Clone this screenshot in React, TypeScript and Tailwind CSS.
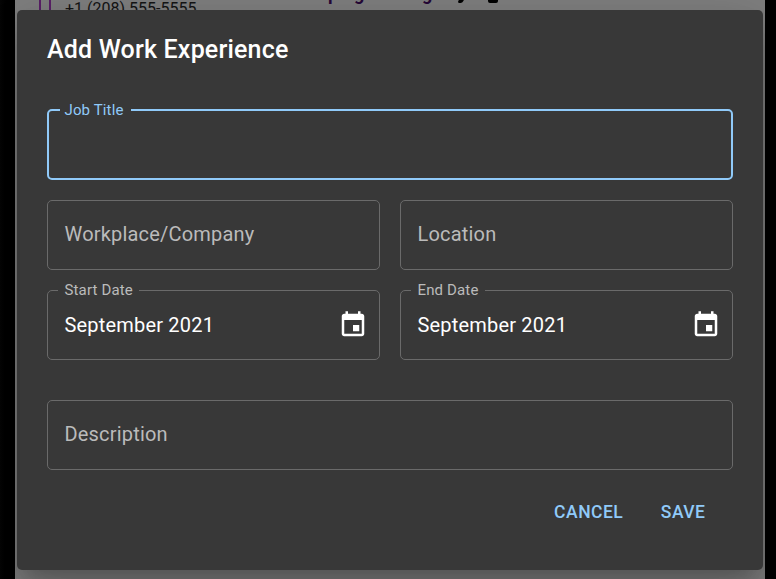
import type { ReactNode } from "react";

function CalendarIcon() {
  return (
    <svg viewBox="0 0 24 24" className="h-[30px] w-[30px] shrink-0 fill-white" aria-hidden="true">
      <path d="M17 12h-5v5h5v-5zM16 1v2H8V1H6v2H5c-1.11 0-1.99.9-1.99 2L3 19c0 1.1.89 2 2 2h14c1.1 0 2-.9 2-2V5c0-1.1-.9-2-2-2h-1V1h-2zm3 18H5V8h14v11z" />
    </svg>
  );
}

function Placeholder({ children }: { children: ReactNode }) {
  return (
    <div className="flex h-[70px] flex-1 items-center rounded-[5px] border border-[#6a6a6a] px-[16.5px] pb-[2px] text-[20px] tracking-[0.00938em] text-[#bbbbbb]">
      {children}
    </div>
  );
}

function DateField({ label, value, gap }: { label: string; value: string; gap: string }) {
  return (
    <div className="relative flex h-[70px] flex-1 items-center justify-between rounded-[5px] border border-[#6a6a6a] pr-[11px] pl-[16.5px] text-[20px] tracking-[0.00938em] text-white">
      <span className={`absolute -top-[10px] left-[10px] h-[18px] bg-[#383838] pl-[6.5px] text-[15px] leading-[18px] tracking-[0.00938em] text-[#bbbbbb] ${gap}`}>
        {label}
      </span>
      <span>{value}</span>
      <CalendarIcon />
    </div>
  );
}

export default function App() {
  return (
    <div className="relative h-[579px] w-[776px] overflow-hidden bg-black font-[Roboto,sans-serif]">
      <div className="h-full w-[15px] bg-linear-to-r from-[#060606] to-black absolute" />
      <div className="mr-[11px] ml-[15px] h-full bg-[#808080]">
        <div className="relative h-[10px] text-[#151515]">
          <span className="absolute -top-[10px] left-[24px] h-[24px] w-[12px] border-2 border-[#5a2068]" />
          <span className="absolute top-0 left-[50px] text-[16px] leading-[18px] whitespace-nowrap">+1 (208) 555-5555</span>
          <div className="absolute -top-[16px] left-[313px] flex text-[18px] leading-[20px] font-bold text-[#260838]">
            <span className="w-[26px]">p</span>
            <span className="w-[68px]">g</span>
            <span>g</span>
          </div>
          <span className="absolute -top-[8px] left-[445px] h-[11px] w-[5px] skew-x-[-25deg] rounded-b-[2px] bg-black" />
          <span className="absolute -top-[8px] left-[473px] h-[11px] w-[10px] rounded-[2px] bg-black" />
        </div>
      </div>
      <div
        role="dialog"
        className="absolute top-[10px] left-[17px] flex h-[560px] w-[746px] flex-col rounded-[5px] bg-[#383838] px-[30px] shadow-[0_13.75px_18.75px_-8.75px_rgba(0,0,0,0.2),0_30px_47.5px_3.75px_rgba(0,0,0,0.14),0_11.25px_57.5px_10px_rgba(0,0,0,0.12)]"
      >
        <h2 className="mt-[20px] h-[40px] text-[25px] leading-[40px] font-medium tracking-[0.0075em] text-white">
          Add Work Experience
        </h2>
        <div className="relative mt-[39px] h-[71px] rounded-[5px] border-2 border-[#90caf9]">
          <span className="absolute -top-[10px] left-[11px] h-[18px] w-[71px] bg-[#383838] pl-[4.5px] text-[15px] leading-[18px] tracking-[0.00938em] text-[#90caf9]">
            Job Title
          </span>
        </div>
        <div className="mt-[20px] flex gap-[20px]">
          <Placeholder>Workplace/Company</Placeholder>
          <Placeholder>Location</Placeholder>
        </div>
        <div className="mt-[20px] flex gap-[20px]">
          <DateField label="Start Date" value="September 2021" gap="w-[81px]" />
          <DateField label="End Date" value="September 2021" gap="w-[74px]" />
        </div>
        <div className="mt-[40px] flex">
          <Placeholder>Description</Placeholder>
        </div>
        <div className="mt-[20px] flex h-[44px] items-center justify-end gap-[37.5px] pr-[27.5px] text-[17.5px] font-medium tracking-[0.02857em] text-[#90caf9]">
          <button>CANCEL</button>
          <button>SAVE</button>
        </div>
      </div>
    </div>
  );
}
